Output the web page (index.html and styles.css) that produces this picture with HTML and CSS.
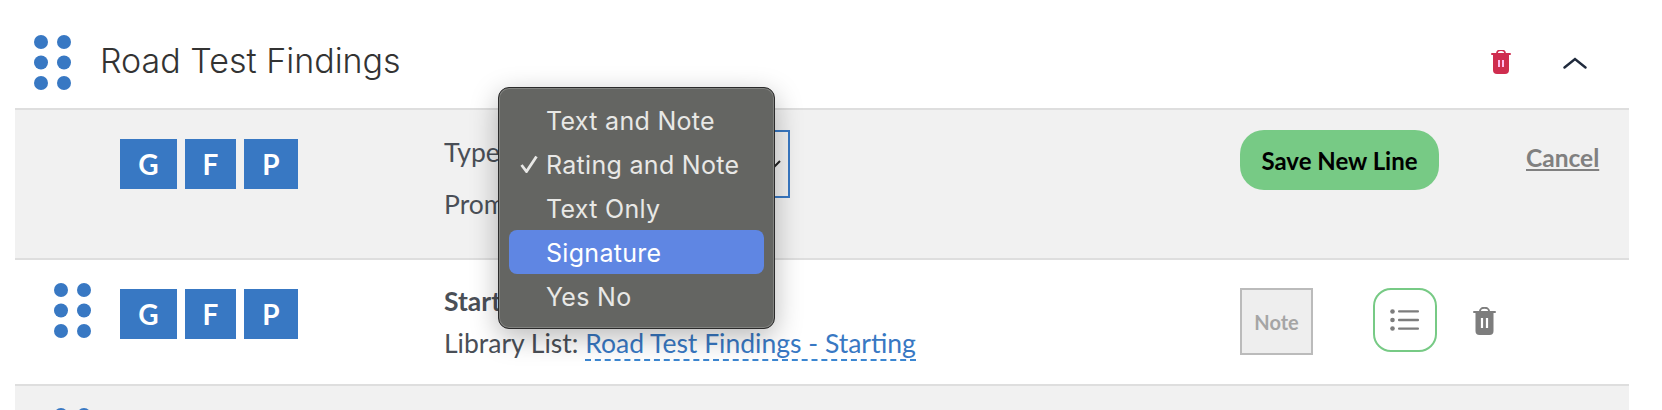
FILE: index.html
```html
<!DOCTYPE html>
<html lang="en">
<head>
    <meta charset="UTF-8">
    <title>Road Test Findings</title>
    <link rel="stylesheet" href="styles.css">
</head>
<body>
    <div class="section">
        <div class="section-header">
            <svg class="dots" width="37" height="55" viewBox="0 0 37 55"><g fill="#3878c3"><circle cx="7" cy="7" r="7"/><circle cx="30" cy="7" r="7"/><circle cx="7" cy="27.500" r="7"/><circle cx="30" cy="27.500" r="7"/><circle cx="7" cy="48" r="7"/><circle cx="30" cy="48" r="7"/></g></svg>
            <h2 class="section-title">Road Test Findings</h2>
            <svg class="trash trash-red" width="20" height="24" viewBox="0 0 20 24"><path d="M6 3a4 3 0 0 1 8 0" fill="none" stroke="#cf2d4f" stroke-width="1.800"/><rect x="0" y="3" width="20" height="2" rx="1" fill="#cf2d4f"/><path d="M2 5h16v15a4 4 0 0 1-4 4H6a4 4 0 0 1-4-4z" fill="#cf2d4f"/><path d="M8 10v7M12 10v7" stroke="#fbe" stroke-width="2"/></svg>
            <svg class="chevron" width="24" height="12" viewBox="0 0 24 12"><path d="M1.500 10.500 12 2l10.500 8.500" fill="none" stroke="#1f2a3c" stroke-width="2.400" stroke-linecap="round"/></svg>
        </div>

        <div class="row row-new">
            <div class="drag"></div>
            <div class="chips">
                <span class="chip chip-g">G</span>
                <span class="chip chip-f">F</span>
                <span class="chip chip-p">P</span>
            </div>
            <div class="fields">
                <div class="field-line">
                    <span>Type</span>
                    <div class="select-box">
                        <svg width="14" height="9" viewBox="0 0 14 9"><path d="M1 1l6 6 6-6" fill="none" stroke="#222" stroke-width="2"/></svg>
                    </div>
                </div>
                <div class="field-line field-prompt">Prompt</div>
            </div>
            <button class="btn-save">Save New Line</button>
            <a class="cancel" href="#">Cancel</a>
        </div>

        <div class="row row-line">
            <div class="drag">
                <svg class="dots" width="37" height="55" viewBox="0 0 37 55"><g fill="#3878c3"><circle cx="7" cy="7" r="7"/><circle cx="30" cy="7" r="7"/><circle cx="7" cy="27.500" r="7"/><circle cx="30" cy="27.500" r="7"/><circle cx="7" cy="48" r="7"/><circle cx="30" cy="48" r="7"/></g></svg>
            </div>
            <div class="chips">
                <span class="chip chip-g">G</span>
                <span class="chip chip-f">F</span>
                <span class="chip chip-p">P</span>
            </div>
            <div class="fields">
                <div class="line-name">Starting</div>
                <div class="line-lib">Library List: <a class="lib-link" href="#">Road Test Findings - Starting</a></div>
            </div>
            <div class="note-box">Note</div>
            <div class="list-btn">
                <svg width="30" height="22" viewBox="0 0 30 22"><g fill="#7d7d7d"><circle cx="2.500" cy="2.500" r="2.300"/><circle cx="2.500" cy="11" r="2.300"/><circle cx="2.500" cy="19.500" r="2.300"/><rect x="8" y="1.200" width="21" height="2.400" rx="1"/><rect x="8" y="9.800" width="21" height="2.400" rx="1"/><rect x="8" y="18.400" width="21" height="2.400" rx="1"/></g></svg>
            </div>
            <svg class="trash" width="23" height="28" viewBox="0 0 23 28"><path d="M7 4a4.500 3.200 0 0 1 9 0" fill="none" stroke="#7d7d7d" stroke-width="2"/><rect x="0" y="4" width="23" height="2" rx="1" fill="#7d7d7d"/><path d="M2.500 6h18v18a4 4 0 0 1-4 4h-10a4 4 0 0 1-4-4z" fill="#7d7d7d"/><path d="M9 11v10M14 11v10" stroke="#fff" stroke-width="2.200"/></svg>
        </div>

        <div class="row row-next">
            <div class="drag">
                <svg class="dots" width="37" height="14" viewBox="0 0 37 14"><g fill="#3878c3"><circle cx="7" cy="7" r="7"/><circle cx="30" cy="7" r="7"/></g></svg>
            </div>
        </div>
    </div>

    <!-- native select popup, sits over the rows -->
    <ul class="menu">
        <li>Text and Note</li>
        <li>
            <svg class="check" width="18" height="18" viewBox="0 0 18 18"><path d="M1.500 10 6.500 16.500 16.500 1.500" fill="none" stroke="#e8e8e6" stroke-width="2.800"/></svg>
            Rating and Note
        </li>
        <li>Text Only</li>
        <li class="active">Signature</li>
        <li>Yes No</li>
    </ul>
</body>
</html>
```

FILE: styles.css
```css
* {
    margin: 0;
    padding: 0;
    box-sizing: border-box;
}

html, body {
    height: 410px;
    overflow: hidden;
}

body {
    position: relative;
    padding: 0 33px 0 15px;
    background-color: #fff;
    font-family: "Lato", sans-serif;
    color: #4a4f57;
}

.dots {
    display: block;
    flex: none;
}

.section-header {
    display: flex;
    align-items: center;
    height: 110px;
    padding: 35px 0 18px 19px;
    border-bottom: 2px solid #dedede;
}

.section-title {
    margin: -5px 0 0 29px;
    font-family: "Inter", sans-serif;
    font-size: 34px;
    font-weight: 300;
    color: #333;
}

.trash-red {
    margin-left: auto;
    margin-top: -1px;
}

.chevron {
    margin: 0 42px 0 52px;
}

.row {
    display: flex;
    border-bottom: 2px solid #dedede;
}

.row-new {
    height: 150px;
    background-color: #f1f1f1;
}

.row-line {
    height: 126px;
    background-color: #fff;
}

.row-next {
    height: 24px;
    overflow: hidden;
    background-color: #f1f1f1;
    border-bottom: none;
}

.drag {
    flex: none;
    width: 105px;
    padding: 23px 0 0 39px;
}

.row-next .drag {
    padding-top: 22px;
}

.chips {
    flex: none;
    display: flex;
    gap: 8px;
    width: 324px;
    padding-top: 29px;
}

.chip {
    display: flex;
    align-items: center;
    justify-content: center;
    height: 50px;
    background-color: #3878c3;
    color: #fff;
    font-size: 28px;
    font-weight: 700;
}

.chip-g {
    width: 57px;
}

.chip-f {
    width: 51px;
}

.chip-p {
    width: 54px;
}

.fields {
    flex: none;
    width: 796px;
    font-size: 26.500px;
}

.field-line {
    display: flex;
    align-items: flex-start;
    width: 346px;
    padding-top: 26px;
    line-height: 32px;
}

.field-prompt {
    padding-top: 0;
    margin-top: -10px;
}

.select-box {
    flex: 1;
    display: flex;
    align-items: center;
    justify-content: flex-end;
    height: 68px;
    margin: -6px 0 0 14px;
    padding-right: 7px;
    border: 2px solid #3878c3;
}

.line-name {
    padding-top: 25px;
    font-weight: 700;
    line-height: 32px;
}

.line-lib {
    padding-top: 10px;
    line-height: 32px;
}

.lib-link {
    color: #3878c3;
    text-decoration: none;
    border-bottom: 2px dashed #3b86d1;
}

.btn-save {
    flex: none;
    align-self: flex-start;
    width: 199px;
    height: 60px;
    margin-top: 20px;
    border: none;
    border-radius: 24px;
    background-color: #77ca85;
    color: #000;
    font-family: "Lato", sans-serif;
    font-size: 24px;
    font-weight: 700;
}

.cancel {
    margin: 32px 0 0 87px;
    align-self: flex-start;
    line-height: 32px;
    color: #808080;
    font-size: 24.500px;
    font-weight: 700;
}

.note-box {
    flex: none;
    display: flex;
    align-items: center;
    justify-content: center;
    width: 73px;
    height: 67px;
    margin-top: 28px;
    border: 2px solid #bbb;
    background-color: #eee;
    color: #a5a5a5;
    font-size: 20px;
    font-weight: 700;
}

.list-btn {
    flex: none;
    display: flex;
    align-items: center;
    justify-content: center;
    width: 64px;
    height: 64px;
    margin: 28px 0 0 60px;
    border: 2px solid #77ca85;
    border-radius: 18px;
}

.row-line .trash {
    flex: none;
    margin: 47px 0 0 36px;
}

.menu {
    position: absolute;
    left: 498px;
    top: 87px;
    width: 277px;
    height: 242px;
    padding: 10px;
    list-style: none;
    border: 1px solid #2b2b2b;
    border-radius: 11px;
    background-color: #646562;
    box-shadow: inset 0 0 0 1px #828380, 0 8px 28px rgba(0, 0, 0, 0.28);
    font-family: "Inter", sans-serif;
    font-size: 25px;
    letter-spacing: 0.3px;
    color: #e8e8e6;
}

.menu li {
    position: relative;
    height: 44px;
    padding-left: 37px;
    line-height: 46px;
    border-radius: 8px;
}

.menu li.active {
    background-color: #5f86e3;
    color: #fff;
}

.check {
    position: absolute;
    left: 11px;
    top: 13px;
}
```
